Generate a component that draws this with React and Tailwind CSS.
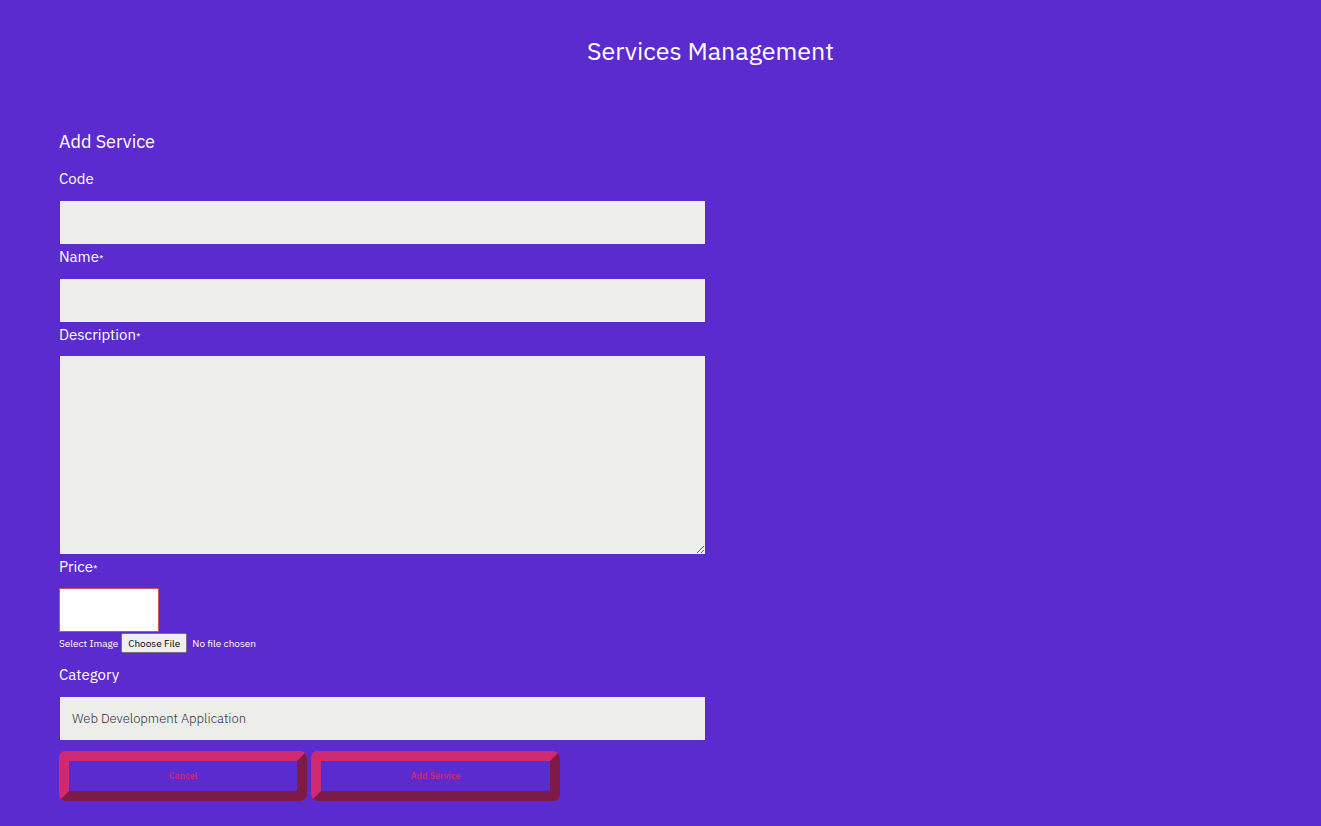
import React from "react";

export default function App() {
  const font = { fontFamily: '"IBM Plex Sans", "Noto Sans", Arial, sans-serif' };
  const label = "block text-[15px] leading-6 text-white";
  const star = "text-[10px] leading-none";
  const input = "block w-[647px] h-[45px] bg-[#ededea] border border-[#5b2bcf] outline-none px-3";
  return (
    <div className="min-h-[826px] w-full bg-[#5b2bcf] text-white" style={font}>
      <div className="flex justify-center pt-[35px] pl-[100px]">
        <h1 className="text-[25px] leading-8 font-normal">Services Management</h1>
      </div>
      <div className="pl-[59px] pt-[61px]">
        <h2 className="text-[18px] leading-[27px] mb-[12px]">Add Service</h2>
        <label className={label + " mb-[9px]"}>Code</label>
        <input className={input} />
        <label className={label + " mb-[9px]"}>
          Name<span className={star}>*</span>
        </label>
        <input className={input} />
        <label className={label + " mb-[8px]"}>
          Description<span className={star}>*</span>
        </label>
        <textarea className="block w-[647px] h-[200px] bg-[#ededea] border border-[#5b2bcf] outline-none resize-y" />
        <label className={label + " mb-[9px]"}>
          Price<span className={star}>*</span>
        </label>
        <input className="block w-[100px] h-[44px] bg-white border border-[#c5554f] outline-none" />
        <div className="flex items-center h-[22px] mb-[9px] text-[10px]">
          <span className="mr-[3px]">Select Image</span>
          <span className="h-[20px] px-[6px] flex items-center bg-[#efefef] text-black border border-[#767676] rounded-[2px]">Choose File</span>
          <span className="ml-[5px]">No file chosen</span>
        </div>
        <label className={label + " mb-[9px]"}>Category</label>
        <div className="w-[647px] h-[45px] bg-[#ededea] border border-[#5b2bcf] flex items-center pl-[12px] text-[13px] text-[#333] font-light">
          Web Development Application
        </div>
        <div className="flex gap-[4px] mt-[10px]">
          <button className="w-[248px] h-[50px] rounded-[7px] border-[10px] border-t-[#cf2a70] border-l-[#cf2a70] border-b-[#7e1a48] border-r-[#7e1a48] bg-[#5b2bcf] text-[9px] font-semibold text-[#c9287a]">
            Cancel
          </button>
          <button className="w-[249px] h-[50px] rounded-[7px] border-[10px] border-t-[#cf2a70] border-l-[#cf2a70] border-b-[#7e1a48] border-r-[#7e1a48] bg-[#5b2bcf] text-[9px] font-semibold text-[#c9287a]">
            Add Service
          </button>
        </div>
      </div>
    </div>
  );
}
